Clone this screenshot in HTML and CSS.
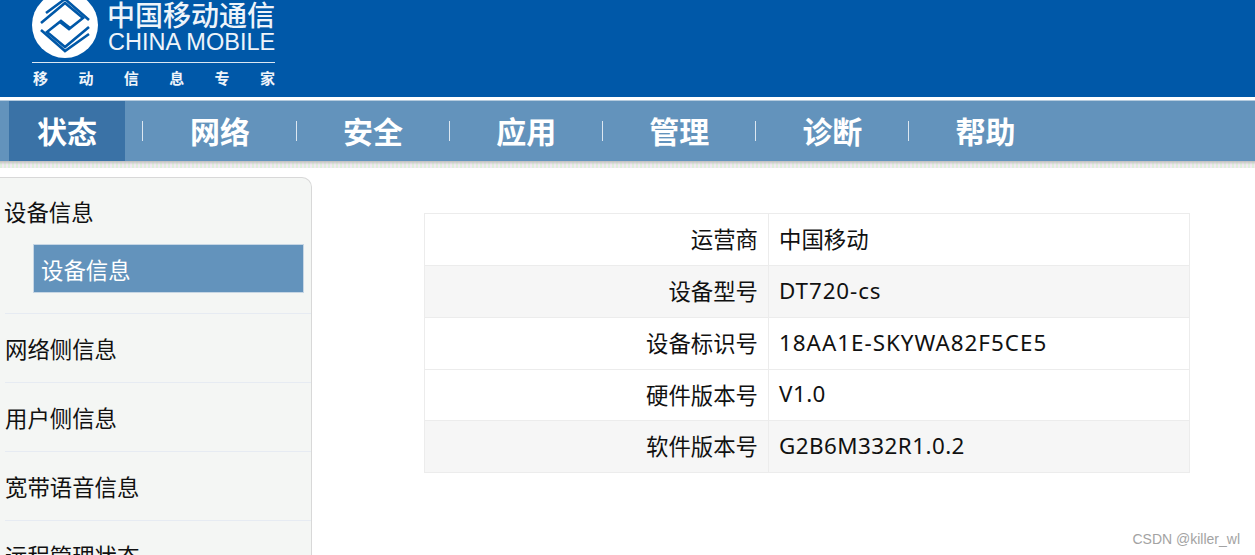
FILE: index.html
```
<!DOCTYPE HTML>
<html>
    <head>
        <title>设备信息</title>
        <meta charset="utf-8" />
        <link rel="stylesheet" href="styles.css">
    </head>
    <body>
        <div class="header">
            <div class="logo">
                <div class="logo-top">
                    <svg class="logo-mark" width="66" height="66" viewBox="0 0 66 66">
                        <circle cx="33" cy="33" r="33" fill="#fff"/>
                        <g fill="none" stroke="#0058a8" stroke-width="2.6">
                            <path d="M9 31 L33 11 L51 26 L37 37 L28 30"/>
                            <path d="M57 35 L33 55 L15 40 L29 29 L38 36"/>
                            <path d="M9 38 L33 59 L57 42"/>
                            <path d="M57 28 L33 7 L14 21"/>
                        </g>
                    </svg>
                    <div class="logo-names">
                        <div class="logo-cn">中国移动通信</div>
                        <div class="logo-en">CHINA MOBILE</div>
                    </div>
                </div>
                <div class="logo-slogan">
                    <span>移</span><span>动</span><span>信</span><span>息</span><span>专</span><span>家</span>
                </div>
            </div>
        </div>
        <div class="nav">
            <a class="nav-item active">状态</a>
            <a class="nav-item">网络</a>
            <a class="nav-item">安全</a>
            <a class="nav-item">应用</a>
            <a class="nav-item">管理</a>
            <a class="nav-item">诊断</a>
            <a class="nav-item">帮助</a>
        </div>
        <div class="nav-shadow"></div>
        <div class="main">
            <div class="sidebar">
                <div class="side-group">
                    <div class="side-title first">设备信息</div>
                    <div class="side-sub">设备信息</div>
                </div>
                <div class="side-group"><div class="side-title">网络侧信息</div></div>
                <div class="side-group"><div class="side-title">用户侧信息</div></div>
                <div class="side-group"><div class="side-title">宽带语音信息</div></div>
                <div class="side-group"><div class="side-title">远程管理状态</div></div>
            </div>
            <div class="content">
                <table class="info" cellspacing="0" cellpadding="0">
                    <tr><th>运营商</th><td class="cn">中国移动</td></tr>
                    <tr class="alt"><th>设备型号</th><td>DT720-cs</td></tr>
                    <tr><th>设备标识号</th><td class="wide">18AA1E-SKYWA82F5CE5</td></tr>
                    <tr class="short"><th>硬件版本号</th><td class="narrow">V1.0</td></tr>
                    <tr class="alt"><th>软件版本号</th><td class="narrow">G2B6M332R1.0.2</td></tr>
                </table>
            </div>
        </div>
        <div class="watermark">CSDN @killer_wl</div>
    </body>
</html>
```
FILE: styles.css
```
html, body {
    height: 555px;
    overflow: hidden;
}

body {
    margin: 0;
    background-color: #fff;
    font-family: "Noto Sans CJK SC", "Noto Sans", sans-serif;
    color: #111;
}

.header {
    height: 97px;
    background-color: #0058a8;
    overflow: hidden;
    padding-left: 32px;
}

.logo {
    width: 243px;
    color: #eef4fa;
}

.logo-top {
    display: flex;
    gap: 9px;
    height: 62px;
}

.logo-mark {
    margin-top: -8px;
    flex-shrink: 0;
}

.logo-cn {
    font-size: 28px;
    font-weight: 500;
    line-height: 28px;
    white-space: nowrap;
}

.logo-en {
    font-family: "Liberation Sans", sans-serif;
    font-size: 23.5px;
    line-height: 24px;
    margin-top: 2px;
    margin-left: 1px;
    white-space: nowrap;
}

.logo-slogan {
    display: flex;
    justify-content: space-between;
    border-top: 1px solid #dbe7f3;
    padding: 5px 0 0 1px;
    font-size: 15px;
    line-height: 20px;
    font-weight: bold;
}

.nav {
    display: flex;
    height: 60px;
    margin-top: 4px;
    padding-left: 9px;
    background-color: #6393bc;
    box-shadow: 0 -1px 0 #b5cbde;
}

.nav-item {
    position: relative;
    width: 153.1px;
    padding-left: 28px;
    box-sizing: border-box;
    color: #fff;
    font-size: 30px;
    font-weight: bold;
    line-height: 58px;
}

.nav-item.active {
    width: 116px;
    margin-right: 37px;
    background-color: #3a72a6;
}

.nav-item.active::after,
.nav-item + .nav-item:not(:last-child)::after {
    content: "";
    position: absolute;
    top: 20px;
    left: 134px;
    width: 1px;
    height: 20px;
    background-color: #dce7f1;
}

.nav-item.active::after {
    left: 133px;
}

.nav-shadow {
    height: 7px;
    background-color: #f1f3ee;
    background-image:
        linear-gradient(#bdbdbd, rgba(240, 240, 240, 0) 55%),
        repeating-linear-gradient(90deg, #dff0dc 0 2px, #f3e9f3 2px 4px);
}

.main {
    display: flex;
    margin-top: 9px;
}

.sidebar {
    width: 312px;
    height: 400px;
    flex-shrink: 0;
    background-color: #f4f6f4;
    border: 1px solid #d8d8d8;
    border-left: none;
    border-radius: 0 10px 0 0;
    box-sizing: border-box;
    padding-left: 5px;
    overflow: hidden;
    font-size: 22.4px;
}

.side-group {
    border-bottom: 1px solid #e6ebf2;
    padding-bottom: 10px;
}

.side-title {
    height: 48px;
    line-height: 48px;
    margin-top: 10px;
}

.side-title.first {
    line-height: 46px;
    margin-left: -1px;
}

.side-group:first-child {
    padding-bottom: 20px;
}

.side-sub {
    width: 271px;
    height: 49px;
    margin: 8px 0 0 28px;
    padding-left: 7px;
    box-sizing: border-box;
    line-height: 49px;
    background-color: #6393bc;
    color: #fff;
    border: 1px solid #c6d6e4;
}

.content {
    padding: 36px 0 0 112px;
}

.info {
    width: 766px;
    border-collapse: collapse;
    font-size: 22.4px;
}

.info th, .info td {
    height: 48px;
    padding: 0 10px 3px;
    border: 1px solid #ececec;
    font-weight: normal;
}

.info .short th, .info .short td {
    height: 47px;
}

.info th {
    width: 323px;
    text-align: right;
}

.info td {
    font-family: "Noto Sans", "Noto Sans CJK SC", sans-serif;
    text-align: left;
    letter-spacing: 0.9px;
}

.info td.cn {
    letter-spacing: 0;
}

.info td.wide {
    letter-spacing: 1px;
}

.info td.narrow {
    letter-spacing: 0.45px;
}

.info .alt th, .info .alt td {
    background-color: #f6f6f6;
}

.watermark {
    position: absolute;
    right: 15px;
    bottom: 8px;
    color: #a3a3a3;
    font-family: "Liberation Sans", sans-serif;
    font-size: 14px;
}
```
